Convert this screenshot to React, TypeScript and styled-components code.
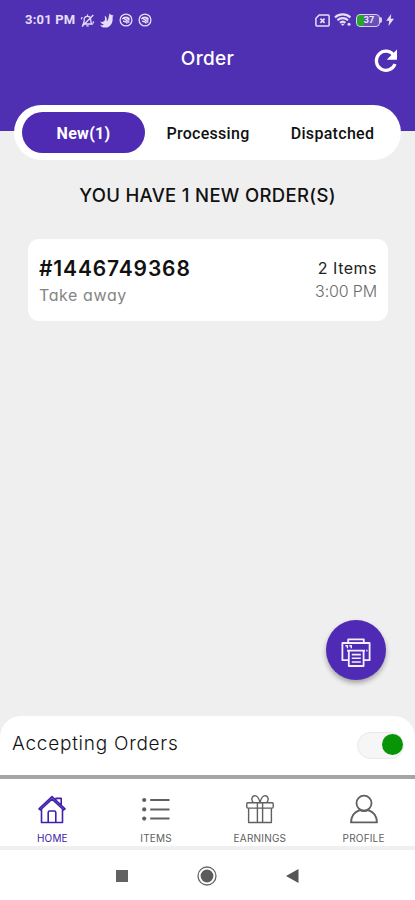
import React from "react";
import styled, { createGlobalStyle } from "styled-components";

const purple = "#5030b2";

const GlobalStyle = createGlobalStyle`
  * { box-sizing: border-box; }
  html, body { margin: 0; padding: 0; }
  body { background: #efefef; }
`;

const Screen = styled.div`
  width: 415px;
  height: 900px;
  display: flex;
  flex-direction: column;
  overflow: hidden;
  background: #efefef;
  font-family: "Inter", "Open Sans", sans-serif;
  font-feature-settings: "cv11";
  color: #111;
`;

const Header = styled.header`
  height: 131px;
  flex: none;
  background: ${purple};
`;

const StatusBar = styled.div`
  height: 40px;
  padding: 0 21px 0 25px;
  display: flex;
  align-items: center;
  justify-content: space-between;
  color: #e6def8;
`;

const StatusGroup = styled.div<{ $gap: number }>`
  display: flex;
  align-items: center;
  gap: ${(p) => p.$gap}px;
  svg { display: block; }
`;

const Clock = styled.span`
  width: 50px;
  font: 700 13px/16px "Roboto", sans-serif;
  letter-spacing: 0.2px;
  white-space: nowrap;
`;

const TitleBar = styled.div`
  height: 42px;
  padding: 0 16px;
  display: grid;
  grid-template-columns: 26px 1fr 26px;
  align-items: center;
`;

const Title = styled.h1`
  grid-column: 2;
  margin: 0;
  padding-bottom: 4px;
  text-align: center;
  color: #fff;
  font-size: 19px;
  line-height: 24px;
  font-weight: 500;
  letter-spacing: 0.3px;
`;

const IconButton = styled.button`
  padding: 0;
  border: 0;
  background: none;
  display: flex;
`;

const Tabs = styled.nav`
  flex: none;
  margin: -26px 14px 0;
  height: 55px;
  padding: 7px 7px 7px 8px;
  border-radius: 28px;
  background: #fff;
  display: grid;
  grid-template-columns: 123px 126px 1fr;
`;

const Tab = styled.button<{ $active?: boolean }>`
  border: 0;
  padding: 2px 0 0;
  border-radius: 21px;
  background: ${(p) => (p.$active ? "#4f2bb3" : "transparent")};
  color: ${(p) => (p.$active ? "#fff" : "#111")};
  font: ${(p) => (p.$active ? 700 : 500)} 16px/20px "Roboto", sans-serif;
  letter-spacing: ${(p) => (p.$active ? 0.3 : 0.3)}px;
`;

const Heading = styled.h2`
  margin: 22px 0 0;
  text-align: center;
  font-size: 18.5px;
  line-height: 26px;
  font-weight: 500;
  letter-spacing: 0.32px;
  white-space: nowrap;
`;

const Card = styled.article`
  flex: none;
  margin: 31px 27px 0 28px;
  height: 82px;
  padding: 15px 11px 0;
  border-radius: 11px;
  background: #fff;
  display: flex;
  justify-content: space-between;
`;

const CardColumn = styled.div<{ $end?: boolean }>`
  display: flex;
  flex-direction: column;
  align-items: ${(p) => (p.$end ? "flex-end" : "flex-start")};
  padding-top: ${(p) => (p.$end ? 3 : 0)}px;
`;

const OrderNumber = styled.strong`
  font-size: 21px;
  line-height: 29px;
  font-weight: 600;
  letter-spacing: 0.85px;
`;

const OrderType = styled.span`
  font-size: 16px;
  line-height: 24px;
  color: #858585;
  letter-spacing: 0.6px;
`;

const OrderMeta = styled.span<{ $muted?: boolean }>`
  font-size: 16px;
  line-height: 23px;
  font-weight: ${(p) => (p.$muted ? 300 : 400)};
  color: ${(p) => (p.$muted ? "#6c6c6c" : "#222")};
  letter-spacing: ${(p) => (p.$muted ? -0.15 : 0.5)}px;
`;

const FabRow = styled.div`
  flex: 1;
  display: flex;
  align-items: flex-end;
  justify-content: flex-end;
  padding: 0 29px 36px 0;
`;

const Fab = styled.button`
  width: 60px;
  height: 60px;
  padding: 5px 0 0;
  border: 0;
  border-radius: 50%;
  background: #4f2bb5;
  box-shadow: 0 3px 5px rgba(0, 0, 0, 0.32);
  display: flex;
  align-items: center;
  justify-content: center;
`;

const AcceptBar = styled.section`
  flex: none;
  height: 59px;
  padding: 0 11px 1px 12px;
  border-radius: 21px 21px 0 0;
  background: #fff;
  display: flex;
  align-items: center;
  justify-content: space-between;
`;

const AcceptLabel = styled.span`
  padding-bottom: 3px;
  font-size: 19px;
  line-height: 26px;
  font-weight: 300;
  letter-spacing: 0.75px;
`;

const Switch = styled.button`
  width: 47px;
  height: 27px;
  padding: 0 0 2px;
  border: 1px solid #e9e9e9;
  border-radius: 14px;
  background: #f6f6f6;
  display: flex;
  align-items: center;
  justify-content: flex-end;
`;

const Knob = styled.span`
  width: 21px;
  height: 21px;
  border-radius: 50%;
  background: #079407;
`;

const BottomNav = styled.nav`
  flex: none;
  height: 75px;
  border-top: 4px solid #a5a5a5;
  border-bottom: 4px solid #f0f0f0;
  background: #fff;
  display: grid;
  grid-template-columns: repeat(4, 1fr);
`;

const NavItem = styled.button<{ $active?: boolean }>`
  border: 0;
  padding: 15px 0 0 1px;
  background: none;
  display: flex;
  flex-direction: column;
  align-items: center;
  gap: 7px;
  color: ${(p) => (p.$active ? "#4220ac" : "#606060")};
`;

const NavLabel = styled.span`
  font: 400 10px/14px "Inter", sans-serif;
  letter-spacing: 0.2px;
`;

const SystemBar = styled.footer`
  flex: none;
  height: 50px;
  background: #fff;
  display: flex;
  align-items: center;
  justify-content: center;
  gap: 69px;
  padding-top: 1px;
  svg { display: block; }
`;

const MutedBell = () => (
  <svg width="15" height="15" viewBox="0 0 15 15" fill="none" stroke="currentColor" strokeWidth="1.3">
    <path d="M3.3 11h8.5c-1-1.2-1.1-2.2-1.1-4.2 0-2-1.1-3.5-3.2-3.5S4.2 4.8 4.2 6.8c0 2 0 3-.9 4.2zM6.3 12.8h2.4M7.5 1.5v1.7M2 13.5 13.3 2M1.3 6.3l.8-2.2M13.7 8.5l-.8 2" />
  </svg>
);

const Swoosh = () => (
  <svg width="14" height="15" viewBox="0 0 14 15" fill="currentColor">
    <path d="M.3 8.6c2 .8 4.3.1 4.7-2.1.2-1.2-.4-2.2-.1-3.7C6.5 4 7.3 6 6.6 8.3 9 7 8.2 4 9.7.6l1.6 1.5 2.3.4-1.1 1.4c1 4.9-1.7 10.6-7.4 10.7-2.4 0-4.3-.9-4.9-2.6 1.5.5 2.6.4 3.6-.3C2.3 11.1.9 10.2.3 8.6z" />
  </svg>
);

const CircleBadge = () => (
  <svg width="14" height="14" viewBox="0 0 14 14" fill="none" stroke="currentColor" strokeWidth="1.3">
    <circle cx="7" cy="7" r="5.9" />
    <path d="M3.3 6.1C5 3.8 8.5 3.5 10.4 6M4 8.2c2-.2 3.4.4 4.5 2.2M5.1 5.4l5.2 4.1M7.2 5.3c1.5 0 2.6.8 3 2.3" strokeWidth="1.5" />
  </svg>
);

const SimMissing = () => (
  <svg width="15" height="13" viewBox="0 0 15 13" fill="none" stroke="currentColor" strokeWidth="1.5">
    <path d="M4.2 1h9c.5 0 .9.3.9.9v9.2c0 .5-.4.9-.9.9H1.8c-.5 0-.9-.4-.9-.9V4.3z" />
    <path d="m5.4 4.7 4.2 4.2m0-4.2L5.4 8.9" strokeWidth="1.7" />
  </svg>
);

const Wifi = () => (
  <svg width="18" height="14" viewBox="0 0 18 14" fill="none" stroke="currentColor" strokeWidth="2.1">
    <path d="M1 4.4c4.2-4 11.2-4 15.4 0M3.4 7.2c3-2.8 7.6-2.8 10.6 0M6 9.8c1.6-1.5 3.8-1.5 5.4 0" />
    <path d="m8.7 13 2-2.2H6.7z" fill="currentColor" stroke="none" />
    <circle cx="15" cy="11.3" r="1.5" fill="currentColor" stroke="none" />
  </svg>
);

const BatteryShell = styled.span`
  width: 24px;
  height: 13px;
  border: 1.5px solid #d8d0f0;
  border-radius: 4px;
  background: linear-gradient(90deg, #28a52d 0 7px, #6950b4 7px);
  color: #eee8ff;
  font: 700 9px/11px "Roboto", sans-serif;
  text-align: center;
  padding-left: 2px;
`;

const BatteryTip = styled.span`
  width: 2px;
  height: 6px;
  border-radius: 0 2px 2px 0;
  background: #d8d0f0;
`;

const BatteryWrap = styled.span`
  display: flex;
  align-items: center;
`;

const Bolt = () => (
  <svg width="8" height="12" viewBox="0 0 8 12" fill="currentColor">
    <path d="M5.2 0 .2 6.7h3L2.5 12 8 4.8H4.7z" />
  </svg>
);

const Refresh = () => (
  <svg width="26" height="26" viewBox="0 0 26 26" fill="none">
    <path d="M20.9 7.3A9.6 9.6 0 1 0 22 16" stroke="#fff" strokeWidth="3.2" />
    <path d="M24 1.5v10.3H13.7z" fill="#fff" />
  </svg>
);

const Printer = () => (
  <svg width="30" height="30" viewBox="0 0 30 30" fill="none" stroke="#f5eeff" strokeWidth="1.8" strokeLinejoin="round">
    <path d="M7.2 5V1.3h15.6V5M7 22.2H1.4V5h27.2v17.2H23" />
    <path d="M6 12.6h18M25.3 12.6h1.2M7.8 13v15h14.8V13" />
    <path d="M10.8 16.6h9M10.8 20.3h9M10.8 24h9" strokeWidth="1.6" />
    <path d="M4.4 7.7h2v2.6M8.3 7.7h2v2.6" strokeWidth="1.4" />
  </svg>
);

const Home = () => (
  <svg width="28" height="30" viewBox="0 0 28 30" fill="none" stroke="currentColor" strokeWidth="1.6" strokeLinejoin="round">
    <path d="M3.5 14.4V28.5h21V14.4M1 14.9 14 2.7l13 12.2-1.3 1.1L14 5.2 2.3 16zM18 5.6V4.4h5.2v6.5M10.2 28.5V18.6c0-1 .6-1.6 1.5-1.6h4.6c.9 0 1.5.6 1.5 1.6v9.9" />
  </svg>
);

const Items = () => (
  <svg width="28" height="30" viewBox="0 0 28 30" fill="none" stroke="currentColor" strokeWidth="2">
    <path d="M8.2 6H27.5M8.2 15.4H27.5M8.2 24.6H27.5" />
    <g fill="currentColor" stroke="none">
      <circle cx="2.2" cy="6" r="2.1" />
      <circle cx="2.2" cy="15.4" r="2.1" />
      <circle cx="2.2" cy="24.6" r="2.1" />
    </g>
  </svg>
);

const Gift = () => (
  <svg width="28" height="30" viewBox="0 0 28 30" fill="none" stroke="currentColor" strokeWidth="1.4" strokeLinejoin="round">
    <rect x=".8" y="8.7" width="26.4" height="5.4" rx="1" />
    <path d="M2.6 14.2v14.3h22.8V14.2M11.4 8.7v19.8M16.6 8.7v19.8M7.4 8.7C4.8 6.2 5.7 2.2 8.4 1.7c3-.4 4.7 3.2 5.6 7 .9-3.8 2.6-7.4 5.6-7 2.7.5 3.6 4.5 1 7" />
  </svg>
);

const Profile = () => (
  <svg width="28" height="30" viewBox="0 0 28 30" fill="none" stroke="currentColor" strokeWidth="1.8" strokeLinejoin="round">
    <circle cx="14" cy="9.2" r="7.5" />
    <path d="M1 28.4c.2-6.7 4-10.8 9-12.3 2.7 1.2 5.3 1.2 8 0 5 1.5 8.8 5.6 9 12.3z" />
  </svg>
);

const navItems = [
  { label: "HOME", icon: Home },
  { label: "ITEMS", icon: Items },
  { label: "EARNINGS", icon: Gift },
  { label: "PROFILE", icon: Profile },
];

export default function App() {
  return (
    <Screen>
      <GlobalStyle />
      <Header>
        <StatusBar>
          <StatusGroup $gap={5}>
            <Clock>3:01 PM</Clock>
            <MutedBell />
            <Swoosh />
            <CircleBadge />
            <CircleBadge />
          </StatusGroup>
          <StatusGroup $gap={4}>
            <SimMissing />
            <Wifi />
            <BatteryWrap>
              <BatteryShell>37</BatteryShell>
              <BatteryTip />
            </BatteryWrap>
            <Bolt />
          </StatusGroup>
        </StatusBar>
        <TitleBar>
          <Title>Order</Title>
          <IconButton aria-label="Refresh"><Refresh /></IconButton>
        </TitleBar>
      </Header>
      <Tabs>
        <Tab $active>New(1)</Tab>
        <Tab>Processing</Tab>
        <Tab>Dispatched</Tab>
      </Tabs>
      <Heading>YOU HAVE 1 NEW ORDER(S)</Heading>
      <Card>
        <CardColumn>
          <OrderNumber>#1446749368</OrderNumber>
          <OrderType>Take away</OrderType>
        </CardColumn>
        <CardColumn $end>
          <OrderMeta>2 Items</OrderMeta>
          <OrderMeta $muted>3:00 PM</OrderMeta>
        </CardColumn>
      </Card>
      <FabRow>
        <Fab aria-label="Print"><Printer /></Fab>
      </FabRow>
      <AcceptBar>
        <AcceptLabel>Accepting Orders</AcceptLabel>
        <Switch role="switch" aria-checked="true" aria-label="Accepting Orders"><Knob /></Switch>
      </AcceptBar>
      <BottomNav>
        {navItems.map(({ label, icon: Icon }, i) => (
          <NavItem key={label} $active={i === 0}>
            <Icon />
            <NavLabel>{label}</NavLabel>
          </NavItem>
        ))}
      </BottomNav>
      <SystemBar>
        <svg width="12" height="12" viewBox="0 0 12 12"><rect width="12" height="12" fill="#626262" /></svg>
        <svg width="20" height="20" viewBox="0 0 20 20">
          <circle cx="10" cy="10" r="9" fill="none" stroke="#666" strokeWidth="1.3" />
          <circle cx="10" cy="10" r="6.4" fill="#5c5c5c" />
        </svg>
        <svg width="13" height="14" viewBox="0 0 13 14"><path d="M0 7 12.5 0v14z" fill="#555" /></svg>
      </SystemBar>
    </Screen>
  );
}
